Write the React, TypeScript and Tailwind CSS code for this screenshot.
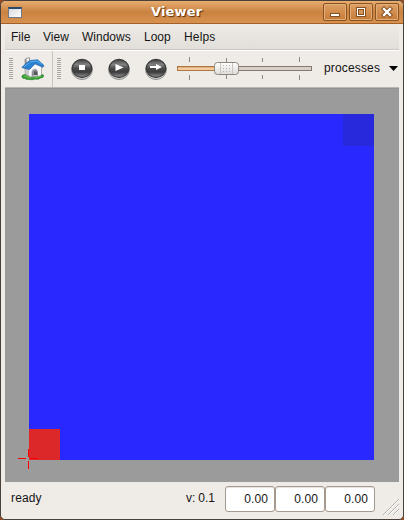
import type { ReactNode } from 'react';

function WindowButton({ children }: { children: ReactNode }) {
  return (
    <div className="h-[18px] w-6 rounded-[2px] border border-[#8b531f] bg-gradient-to-b from-[#dda064] to-[#c77b36] shadow-[inset_0_0_0_1px_#e2ad78]">
      <svg width="22" height="16" viewBox="0 0 22 16" className="block" shapeRendering="crispEdges">{children}</svg>
    </div>
  );
}

function Grip() {
  return (
    <svg width="4" height="22" viewBox="0 0 4 22" className="block shrink-0" shapeRendering="crispEdges">
      {Array.from({ length: 11 }, (_, i) => (
        <rect key={i} x="0" y={i * 2} width="4" height="1" fill="#aaa69f" />
      ))}
    </svg>
  );
}

function HomeIcon() {
  return (
    <svg width="24" height="24" viewBox="0 0 24 24" className="block shrink-0">
      <path d="M.8 20Q1 17.500 4 17.500L6 16H19Q20 18 22.500 18Q23 21 19.500 21Q17.500 23 14 22Q11 23.500 8 22.300Q5 23 4 21.300Q1.500 22 .8 20Z" fill="#3aa238" stroke="#267f2b" strokeWidth=".7" />
      <path d="M3.500 9L9 5L20.500 8.500V18L17 19.500L9 20L4.500 17.500Z" fill="#c9cbcf" stroke="#8f9196" strokeWidth=".6" />
      <path d="M8 12L13 6.500L20 9.500V18L17 19V15Q16 11.500 13.500 11.500Q10.500 12 10.300 15V19.500L8 18.500Z" fill="#f8f8f9" />
      <path d="M11 19.500V15Q11.500 12.300 14 12.300Q16.500 12.500 17 15.500V19L14 17.500Z" fill="#8b8d92" />
      <path d="M13 18V15Q14 13.500 16 15V18Z" fill="#55575b" />
      <path d="M3.500 2.500L5 1.500L5.500 7L3.800 7.500Z" fill="#999" />
      <path d="M5 1.500L8.500.7V5L5.500 7Z" fill="#f2f2f2" stroke="#777" strokeWidth=".7" />
      <path d="M.8 10.500L6 5.500L9 3.500L16.500 2.800L22.800 8.300L22 10.300L14 6.800L8.500 12.500Z" fill="#2a82d3" stroke="#1b5da5" strokeWidth=".7" />
      <path d="M9 4.800L16 4L20.500 7.300M3 9.700L8.500 5.700" fill="none" stroke="#5cb0ee" />
      <path d="M3 19.500L5 19L7 21L9.500 20.500M14 21L17 20L19.500 19.500" fill="none" stroke="#6cc850" strokeWidth=".8" />
    </svg>
  );
}

function Orb({ id, children }: { id: string; children: ReactNode }) {
  return (
    <svg width="22" height="22" viewBox="0 0 22 22" className="block shrink-0">
      <defs>
        <linearGradient id={id} x1="0" y1="0" x2="0" y2="1">
          <stop offset="0" stopColor="#484848" />
          <stop offset=".28" stopColor="#808080" />
          <stop offset=".5" stopColor="#4a4a4a" />
          <stop offset=".7" stopColor="#3c3c3c" />
          <stop offset="1" stopColor="#989898" />
        </linearGradient>
      </defs>
      <ellipse cx="11" cy="11.700" rx="10.400" ry="9.800" fill="#d8d8d6" stroke="#858585" strokeWidth=".9" />
      <ellipse cx="11" cy="10.500" rx="9.800" ry="9" fill={`url(#${id})`} stroke="#3d3d3d" strokeWidth="1.300" />
      {children}
    </svg>
  );
}

function Slider() {
  return (
    <svg width="136" height="24" viewBox="0 0 136 24" className="block shrink-0" shapeRendering="crispEdges">
      <defs>
        <linearGradient id="knob" x1="0" y1="0" x2="0" y2="1">
          <stop stopColor="#fff" />
          <stop offset="1" stopColor="#dedbd6" />
        </linearGradient>
      </defs>
      {[12, 49, 85, 122].map((x) => (
        <g key={x} fill="#8d8881">
          <rect x={x} y={x === 12 || x === 122 ? 0 : 1} width="1" height={x === 12 || x === 122 ? 5 : 4} />
          <rect x={x} y="18" width="1" height={x === 12 || x === 122 ? 5 : 4} />
        </g>
      ))}
      <rect x=".5" y="9.500" width="134" height="4" fill="#d6d0c8" stroke="#85786f" />
      <rect x=".5" y="9.500" width="40" height="4" fill="#f2cda1" stroke="#ad7644" />
      <rect x="1" y="10" width="40" height="1" fill="#e2b07a" />
      <rect x="37.500" y="5.500" width="24" height="12" rx="3" fill="url(#knob)" stroke="#8b867e" shapeRendering="auto" />
      <path d="M43.500 6V17M55.500 6V17" stroke="#c9c6c0" />
      {[0, 1, 2].flatMap((r) => [0, 1, 2].map((c) => <rect key={`${r}-${c}`} x={46 + c * 3} y={8 + r * 3} width="1" height="1" fill="#b4b0aa" />))}
    </svg>
  );
}

function ValueBox() {
  return (
    <div className="flex h-[26px] w-[50px] items-center justify-end rounded-[3px] border border-[#a59a90] bg-white pr-[6px] shadow-[inset_0_1px_0_#e5e2de]">
      <span className="tracking-[0.1px]">0.00</span>
    </div>
  );
}

function Canvas() {
  return (
    <svg width="394" height="394" viewBox="0 0 394 394" className="block shrink-0 bg-[#9b9b9b]" shapeRendering="crispEdges">
      <rect width="394" height="1" fill="#929292" />
      <rect x="24" y="26" width="345" height="346" fill="#2828ff" />
      <rect x="338" y="26" width="31" height="32" fill="#2828dc" />
      <rect x="24" y="341" width="31" height="31" fill="#dc2828" />
      <g fill="#f00">
        <rect x="13" y="370" width="8" height="1" />
        <rect x="25" y="370" width="8" height="1" />
        <rect x="23" y="361" width="1" height="8" />
        <rect x="23" y="373" width="1" height="8" />
      </g>
    </svg>
  );
}

export default function App() {
  return (
    <div className="h-[520px] w-[404px] overflow-hidden bg-[#97491f]">
      <div className="flex h-[520px] w-[404px] flex-col overflow-hidden rounded-t-[6px] rounded-b-[5px] border border-[#494039] bg-[#efebe7] font-['Liberation_Sans',Arial,sans-serif] text-[12px] leading-[14px] text-[#151515]">
        <header className="flex h-[23px] shrink-0 items-center border-b border-[#a36129] bg-gradient-to-b from-[#e7ad70] via-[#ca8240] via-50% to-[#d8924f]">
          <div className="ml-[7px] h-[11px] w-[14px] border border-t-2 border-[#707984] border-t-[#28496c] bg-gradient-to-br from-[#d9dadd] to-white" />
          <div className="ml-[129px] w-[54px] font-['DejaVu_Sans',sans-serif] text-[13px] font-bold leading-[20px] tracking-[0.15px] text-white [text-shadow:1px_1px_1px_#55300f]">Viewer</div>
          <div className="ml-auto mr-1 flex gap-[2px]">
            <WindowButton><path d="M6.500 9.500H15.500V12.500H6.500Z" fill="white" stroke="#825126" /></WindowButton>
            <WindowButton><path d="M6.500 3.500H15.500V12.500H6.500Z" fill="white" stroke="#825126" /><rect x="8.500" y="5.500" width="5" height="5" fill="#d49455" stroke="#825126" /></WindowButton>
            <WindowButton><g shapeRendering="auto"><path d="M8 5L14 11M14 5L8 11" stroke="#825126" strokeWidth="4.400" strokeLinecap="square" /><path d="M8 5L14 11M14 5L8 11" stroke="white" strokeWidth="2.300" strokeLinecap="square" /></g></WindowButton>
          </div>
        </header>
        <nav className="mx-1 flex h-[26px] shrink-0 items-center border-b border-[#cbc7c1] bg-gradient-to-b from-[#eeebe7] to-[#e2dfda] pl-[6px]">
          <span className="w-8">File</span>
          <span className="w-[39px]">View</span>
          <span className="w-[62px]">Windows</span>
          <span className="w-10">Loop</span>
          <span className="tracking-[0.15px]">Helps</span>
        </nav>
        <div className="mx-1 flex h-[38px] shrink-0 items-center border-b border-t border-b-[#bab6b0] border-t-white">
          <div className="flex h-full w-[48px] items-center border-r border-[#c7c3bd] pl-1">
            <Grip />
            <div className="ml-[8px]"><HomeIcon /></div>
          </div>
          <div className="ml-[4px]"><Grip /></div>
          <div className="ml-[10px] flex gap-[15px]">
            <Orb id="stop"><rect x="8" y="7" width="6" height="5" fill="white" /></Orb>
            <Orb id="play"><path d="M7.500 6L15.500 9.500L7.500 13Z" fill="white" /></Orb>
            <Orb id="step"><path d="M5 8H11V6L17 9L11 12V10H5Z" fill="white" /></Orb>
          </div>
          <div className="ml-[10px]"><Slider /></div>
          <span className="mb-[2px] ml-[11px] w-[65px] tracking-[0.15px]">processes</span>
          <svg width="9" height="5" viewBox="0 0 9 5" className="mb-px block shrink-0"><path d="M0 0H9L4.500 5Z" fill="black" /></svg>
        </div>
        <div className="mx-1 shrink-0"><Canvas /></div>
        <footer className="flex h-[37px] min-h-0 items-start pl-[10px]">
          <span className="mt-[9px] w-[175px] tracking-[0.15px]">ready</span>
          <span className="mt-[9px] w-[39px] tracking-[-0.1px]">v: 0.1</span>
          <div className="mt-1 flex"><ValueBox /><ValueBox /><ValueBox /></div>
          <svg width="18" height="18" viewBox="0 0 18 18" className="ml-auto mr-[2px] mt-[16px] block">
            <path d="M0 17L16 1M5 17L16 6M10 17L16 11" stroke="#b5b0a9" />
            <path d="M1 17L16 2M6 17L16 7M11 17L16 12" stroke="white" />
          </svg>
        </footer>
      </div>
    </div>
  );
}
